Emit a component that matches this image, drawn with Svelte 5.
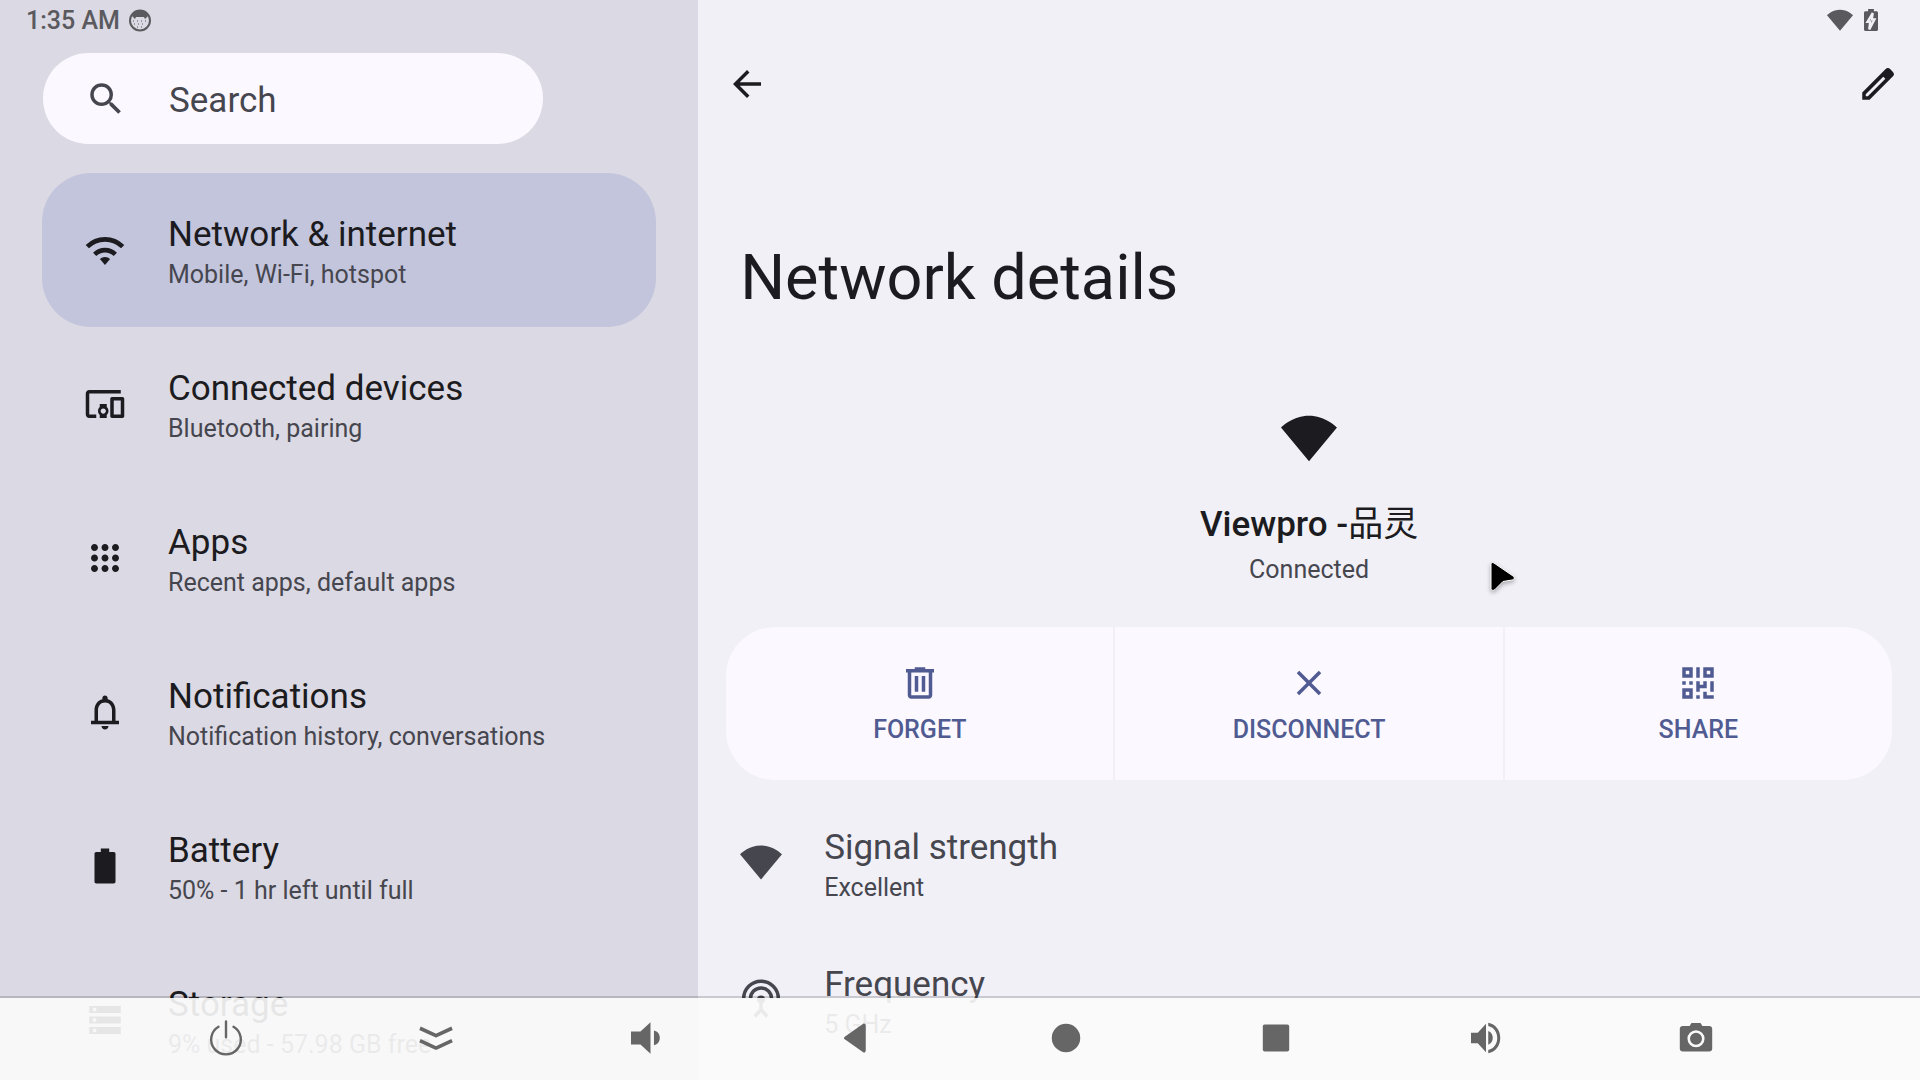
<script lang="ts">
    let query = '';

    const categories = [
        { icon: 'wifi', title: 'Network & internet', summary: 'Mobile, Wi-Fi, hotspot', selected: true },
        { icon: 'devices', title: 'Connected devices', summary: 'Bluetooth, pairing' },
        { icon: 'apps', title: 'Apps', summary: 'Recent apps, default apps' },
        { icon: 'bell', title: 'Notifications', summary: 'Notification history, conversations' },
        { icon: 'battery', title: 'Battery', summary: '50% - 1 hr left until full' },
        { icon: 'storage', title: 'Storage', summary: '9% used - 57.98 GB free' },
    ];

    const actions = [
        { icon: 'trash', label: 'FORGET' },
        { icon: 'close', label: 'DISCONNECT' },
        { icon: 'qr', label: 'SHARE' },
    ];

    const details = [
        { icon: 'signal', title: 'Signal strength', summary: 'Excellent' },
        { icon: 'antenna', title: 'Frequency', summary: '5 GHz' },
    ];

    const navButtons = [
        { icon: 'power', label: 'Power' },
        { icon: 'collapse', label: 'Hide navigation bar' },
        { icon: 'volumeDown', label: 'Volume down' },
        { icon: 'navBack', label: 'Back' },
        { icon: 'navHome', label: 'Home' },
        { icon: 'navRecent', label: 'Recent apps' },
        { icon: 'volumeUp', label: 'Volume up' },
        { icon: 'camera', label: 'Screenshot' },
    ];

    // filled glyphs on a 24x24 grid
    const icons: Record<string, string> = {
        search: 'M15.5 14h-.79l-.28-.27A6.47 6.47 0 0 0 16 9.5 6.5 6.5 0 1 0 9.5 16c1.61 0 3.09-.59 4.23-1.57l.27.28v.79l5 4.99L20.49 19l-4.99-5zm-6 0C7.01 14 5 11.99 5 9.5S7.01 5 9.5 5 14 7.01 14 9.5 11.99 14 9.5 14z',
        devices: 'M3 6h18V4H3c-1.1 0-2 .9-2 2v12c0 1.1.9 2 2 2h4v-2H3V6zm10 6H9v1.78c-.61.55-1 1.33-1 2.22s.39 1.67 1 2.22V20h4v-1.78c.61-.55 1-1.34 1-2.22s-.39-1.67-1-2.22V12zm-2 5.5c-.83 0-1.5-.67-1.5-1.5s.67-1.5 1.5-1.5 1.5.67 1.5 1.5-.67 1.5-1.5 1.5zM22 8h-6c-.5 0-1 .5-1 1v10c0 .5.5 1 1 1h6c.5 0 1-.5 1-1V9c0-.5-.5-1-1-1zm-1 10h-4v-8h4v8z',
        apps: 'M6 8c1.1 0 2-.9 2-2s-.9-2-2-2-2 .9-2 2 .9 2 2 2zm6 12c1.1 0 2-.9 2-2s-.9-2-2-2-2 .9-2 2 .9 2 2 2zm-6 0c1.1 0 2-.9 2-2s-.9-2-2-2-2 .9-2 2 .9 2 2 2zm0-6c1.1 0 2-.9 2-2s-.9-2-2-2-2 .9-2 2 .9 2 2 2zm6 0c1.1 0 2-.9 2-2s-.9-2-2-2-2 .9-2 2 .9 2 2 2zm4-8c0 1.1.9 2 2 2s2-.9 2-2-.9-2-2-2-2 .9-2 2zm-4 2c1.1 0 2-.9 2-2s-.9-2-2-2-2 .9-2 2 .9 2 2 2zm6 6c1.1 0 2-.9 2-2s-.9-2-2-2-2 .9-2 2 .9 2 2 2zm0 6c1.1 0 2-.9 2-2s-.9-2-2-2-2 .9-2 2 .9 2 2 2z',
        bell: 'M18 17v-6c0-3.07-1.63-5.64-4.5-6.32V4c0-.83-.67-1.5-1.5-1.5s-1.5.67-1.5 1.5v.68C7.64 5.36 6 7.92 6 11v6H4v2h16v-2h-2zm-2 0H8v-6c0-2.48 1.51-4.5 4-4.5s4 2.02 4 4.5v6zm-4 5c1.1 0 2-.9 2-2h-4c0 1.1.9 2 2 2z',
        battery: 'M17 4h-2.6V2H9.6v2H7c-.55 0-1 .45-1 1v16c0 .55.45 1 1 1h10c.55 0 1-.45 1-1V5c0-.55-.45-1-1-1z',
        storage: 'M3 20h18v-4H3v4zm2-3h2v2H5v-2zM3 4v4h18V4H3zm4 3H5V5h2v2zm-4 7h18v-4H3v4zm2-3h2v2H5v-2z',
        signal: 'M12 22 24 7.5C23.5 7.1 18.8 2.5 12 2.5S.5 7.1 0 7.5z',
        back: 'M20 11H7.83l5.59-5.59L12 4l-8 8 8 8 1.41-1.41L7.83 13H20v-2z',
        edit: 'M20.41 4.94 19.06 3.59a2 2 0 0 0-2.83 0L3 16.82V21h4.18L20.41 7.77a2 2 0 0 0 0-2.83zM6.2 19H5v-1.2L15 7.8l1.2 1.2z',
        trash: 'M15 4V3H9v1H4v2h1v13c0 1.1.9 2 2 2h10c1.1 0 2-.9 2-2V6h1V4h-5zm2 15H7V6h10v13zM9 8h2v9H9zm4 0h2v9h-2z',
        close: 'M19 6.41 17.59 5 12 10.59 6.41 5 5 6.41 10.59 12 5 17.59 6.41 19 12 13.41 17.59 19 19 17.59 13.41 12z',
        qr: 'M3 3h6v6H3zm2 2v2h2V5zM3 15h6v6H3zm2 2v2h2v-2zM15 3h6v6h-6zm2 2v2h2V5zM11 3h2v6h-2zM3 11h2v2H3zm4 0h2v2H7zm4 0h2v2h2v-2h2v4h-4v2h-2zm8 0h2v6h-2zm-8 8h2v2h-2zm4-2h2v2h4v2h-6z',
        volumeDown: 'M2 7.7v8.6h6.3L15 22.5v-21L8.3 7.7zM17.3 7v9.8c2.6-.5 3.9-2.5 3.9-4.9s-1.3-4.4-3.9-4.9z',
        volumeUp: 'M2 8.5v7h4.5l5.5 6v-19l-5.5 6zM13.5 7.3v9.2c2-.7 3-2.5 3-4.6s-1-3.9-3-4.6zM13.5 1.8V4c3.7.9 6 4 6 8s-2.3 7.1-6 8v2.2c4.8-.8 8-5 8-10.2s-3.2-9.4-8-10.2z',
        navBack: 'M18.5 3.7v16.6c0 1-.9 1.7-1.7 1.2L4.5 12.9c-.7-.5-.7-1.3 0-1.8L16.8 2.5c.8-.5 1.7.2 1.7 1.2z',
        navHome: 'M12 2.5a9.500 9.500 0 1 0 0 19 9.500 9.500 0 0 0 0-19z',
        navRecent: 'M4.500 3h15c.8 0 1.300.6 1.300 1.300v15.400c0 .7-.5 1.300-1.300 1.300h-15c-.8 0-1.300-.6-1.300-1.300V4.300c0-.7.5-1.300 1.300-1.300z',
        camera: 'M9 2 7.700 4H3.200C2 4 1.200 4.800 1.200 5.800v13.400c0 1 .8 1.800 2 1.800h17.600c1.200 0 2-.8 2-1.800V5.800c0-1-.8-1.800-2-1.800h-4.500L15 2H9zm3 16.200a5.700 5.700 0 1 1 0-11.400 5.700 5.700 0 0 1 0 11.400zm0-1.700a4 4 0 1 0 0-8 4 4 0 0 0 0 8z',
        batteryCharging: 'M16.700 4.500h-2.200v-2h-5v2H7.300c-.7 0-1.300.6-1.300 1.300v14.400c0 .7.6 1.300 1.300 1.300h9.400c.7 0 1.300-.6 1.300-1.300V5.800c0-.7-.6-1.300-1.300-1.300z',
    };
</script>

{#snippet icon(name: string)}
    <svg class="icon" viewBox="0 0 24 24" fill="currentColor" aria-hidden="true">
        {#if name === 'wifi'}
            <path d="M12 20.5l-2.900-3.300a4 4 0 0 1 5.800 0z" />
            <g fill="none" stroke="currentColor" stroke-width="2.600">
                <path d="M1.900 10.100a14.300 14.300 0 0 1 20.200 0M6.100 14.500a8.400 8.400 0 0 1 11.800 0" />
            </g>
        {:else if name === 'antenna'}
            <g fill="none" stroke="currentColor" stroke-width="2">
                <path d="M2.100 11.700a9.900 9.900 0 0 1 19.800 0M6 11.700a6 6 0 0 1 12 0" />
                <path d="M12 12.300V18M8.500 22 12 18l3.500 4" />
            </g>
            <circle cx="12" cy="12.300" r="2.300" />
        {:else if name === 'power'}
            <g fill="none" stroke="currentColor" stroke-width="1.600" stroke-linecap="round">
                <path d="M12 1v10.500M7 4.500a9.900 9.900 0 1 0 10 0" />
            </g>
        {:else if name === 'collapse'}
            <g fill="none" stroke="currentColor" stroke-width="2.400" stroke-linejoin="round">
                <path d="M1.300 5.500 12 10.400l10.700-4.900M1.300 13.800 12 18.700l10.700-4.900" />
            </g>
        {:else if name === 'batteryCharging'}
            <path d={icons[name]} />
            <path class="bolt" d="M13.500 6 9 13.500h2.300L10.500 20l4.500-8.500h-2.300z" />
        {:else}
            <path fill-rule="evenodd" d={icons[name]} />
        {/if}
    </svg>
{/snippet}

<div class="settings">
    <aside class="sidebar">
        <div class="status-bar">
            <time>1:35 AM</time>
            <svg class="face" viewBox="0 0 24 24" aria-hidden="true">
                <circle cx="12" cy="12.500" r="10" fill="none" stroke="currentColor" stroke-width="2" />
                <path fill="currentColor" d="M4 8c1-4 4-6 8-6s7 2 8 6l-3 3-1-2H8l-1 2z" />
                <path fill="none" stroke="currentColor" stroke-width="1" stroke-dasharray="1 3" d="M5 13h14M6 16h12M9 19h6" />
            </svg>
        </div>
        <label class="search">
            {@render icon('search')}
            <input type="text" placeholder="Search" aria-label="Search" bind:value={query} />
        </label>
        <nav class="category-list">
            {#each categories as category}
                <a class="category" class:selected={category.selected} href="#{category.icon}">
                    {@render icon(category.icon)}
                    <span class="entry-text">
                        <span class="entry-title">{category.title}</span>
                        <span class="entry-summary">{category.summary}</span>
                    </span>
                </a>
            {/each}
        </nav>
    </aside>

    <main class="content">
        <div class="status-bar status-right">
            <span class="status-wifi">{@render icon('signal')}</span>
            <span class="status-battery">{@render icon('batteryCharging')}</span>
        </div>
        <header class="toolbar">
            <button class="icon-button" aria-label="Back">{@render icon('back')}</button>
            <button class="icon-button" aria-label="Edit">{@render icon('edit')}</button>
        </header>
        <h1>Network details</h1>
        <section class="network">
            <span class="network-icon">{@render icon('signal')}</span>
            <h2>Viewpro -<span lang="zh">品灵</span></h2>
            <p>Connected</p>
        </section>
        <div class="actions">
            {#each actions as action}
                <button class="action">
                    {@render icon(action.icon)}
                    <span>{action.label}</span>
                </button>
            {/each}
        </div>
        <div class="detail-list">
            {#each details as detail}
                <div class="detail">
                    {@render icon(detail.icon)}
                    <div class="entry-text">
                        <span class="entry-title">{detail.title}</span>
                        <span class="entry-summary">{detail.summary}</span>
                    </div>
                </div>
            {/each}
        </div>
    </main>
</div>

<div class="nav-bar">
    {#each navButtons as button}
        <button class="nav-button" aria-label={button.label}>
            {@render icon(button.icon)}
        </button>
    {/each}
</div>

<svg class="pointer" viewBox="0 0 32 36" aria-hidden="true">
    <path d="M5 4.500c0-2 1.500-2.500 3-1.500l19 13c2 1.500 1.500 3.500-1 4l-9 1.500-8 8c-1.500 1.500-4 1-4-1z" />
</svg>

<style>
    :global(body) {
        margin: 0;
        overflow: hidden;
        font-family: Roboto, "Noto Sans CJK SC", sans-serif;
        color: #1b1b20;
    }

    button {
        padding: 0;
        border: none;
        background: none;
        color: inherit;
        font: inherit;
        cursor: pointer;
    }

    .icon {
        display: block;
        flex-shrink: 0;
        width: 42px;
        height: 42px;
    }

    .settings {
        display: grid;
        grid-template-columns: 4fr 7fr;
        height: 100vh;
    }

    .sidebar,
    .content {
        box-sizing: border-box;
        min-width: 0;
        overflow: hidden;
    }

    .sidebar {
        padding: 0 42px;
        background: #dbd9e3;
    }

    .content {
        padding: 0 28px;
        background: #f1f0f7;
    }

    .status-bar {
        display: flex;
        align-items: center;
        gap: 8px;
        height: 40px;
        margin-left: -16px;
        color: #5a5a5e;
        font-size: 25px;
        font-weight: 500;
    }

    .face {
        width: 24px;
        height: 24px;
    }

    .status-right {
        justify-content: flex-end;
        margin: 0 7px 0 0;
        gap: 4px;
    }

    .status-wifi .icon {
        width: 26px;
        height: 26px;
    }

    .status-battery .icon {
        width: 28px;
        height: 28px;
    }

    .bolt {
        fill: #606064;
        stroke: #f1f0f7;
        stroke-width: 2;
    }

    .search {
        display: flex;
        align-items: center;
        gap: 42px;
        box-sizing: border-box;
        width: 500px;
        max-width: 100%;
        height: 91px;
        margin: 13px 0 0 1px;
        padding: 0 42px;
        border-radius: 46px;
        background: #fbf8ff;
        color: #46464f;
    }

    .search input {
        flex: 1;
        min-width: 0;
        padding: 4px 0 0;
        border: none;
        outline: none;
        background: none;
        color: inherit;
        font: inherit;
        font-size: 35px;
    }

    .search input::placeholder {
        color: #46464f;
        opacity: 1;
    }

    .category-list {
        margin-top: 29px;
    }

    .category {
        display: flex;
        align-items: center;
        gap: 42px;
        height: 154px;
        padding: 0 42px;
        border-radius: 49px;
        color: inherit;
        text-decoration: none;
    }

    .category.selected {
        background: #c3c5dd;
    }

    .entry-text {
        display: flex;
        flex-direction: column;
        gap: 4px;
        padding-top: 4px;
    }

    .entry-title {
        font-size: 35px;
        line-height: 42px;
    }

    .entry-summary {
        color: #46464f;
        font-size: 25px;
        line-height: 30px;
    }

    .toolbar {
        display: flex;
        justify-content: space-between;
        height: 84px;
        margin: 2px -7px 0 0;
    }

    .icon-button {
        display: flex;
        align-items: center;
        height: 84px;
    }

    h1 {
        margin: 115px 0 0 14px;
        font-size: 63px;
        font-weight: 400;
        line-height: 74px;
    }

    .network {
        display: flex;
        flex-direction: column;
        align-items: center;
    }

    .network-icon .icon {
        width: 56px;
        height: 56px;
        margin-top: 95px;
    }

    h2 {
        margin: 38px 0 0;
        font-size: 35px;
        font-weight: 500;
        line-height: 42px;
    }

    h2 span {
        font-weight: 400;
    }

    .network p {
        margin: 9px 0 0;
        color: #46464f;
        font-size: 25px;
        line-height: 30px;
    }

    .actions {
        display: grid;
        grid-template-columns: repeat(3, 1fr);
        gap: 2px;
        margin-top: 42px;
        border-radius: 49px;
        overflow: hidden;
    }

    .action {
        display: flex;
        flex-direction: column;
        align-items: center;
        justify-content: center;
        gap: 11px;
        height: 153px;
        background: #fbf8ff;
        color: #505b92;
        font-size: 25px;
        font-weight: 500;
        line-height: 30px;
    }

    .detail-list {
        margin-top: 13px;
    }

    .detail {
        display: flex;
        align-items: center;
        gap: 42px;
        height: 137px;
        padding: 0 14px;
        color: #46464f;
    }

    .detail .entry-text {
        padding-top: 6px;
    }

    .nav-bar {
        position: fixed;
        right: 0;
        bottom: 0;
        left: 0;
        display: grid;
        grid-template-columns: repeat(8, 1fr);
        box-sizing: border-box;
        height: 84px;
        padding: 0 6.2% 2px 6.3%;
        border-top: 2px solid rgba(0, 0, 0, 0.16);
        background: rgba(251, 251, 251, 0.91);
        background-clip: padding-box;
        color: #666;
    }

    .nav-button {
        display: flex;
        align-items: center;
        justify-content: center;
    }

    .nav-button .icon {
        width: 36px;
        height: 36px;
    }

    .pointer {
        position: absolute;
        top: 560px;
        left: 1486px;
        width: 32px;
        height: 36px;
        fill: #000;
        stroke: #fff;
        stroke-width: 1;
        filter: drop-shadow(0 2px 2px rgba(0, 0, 0, 0.3));
    }
</style>
